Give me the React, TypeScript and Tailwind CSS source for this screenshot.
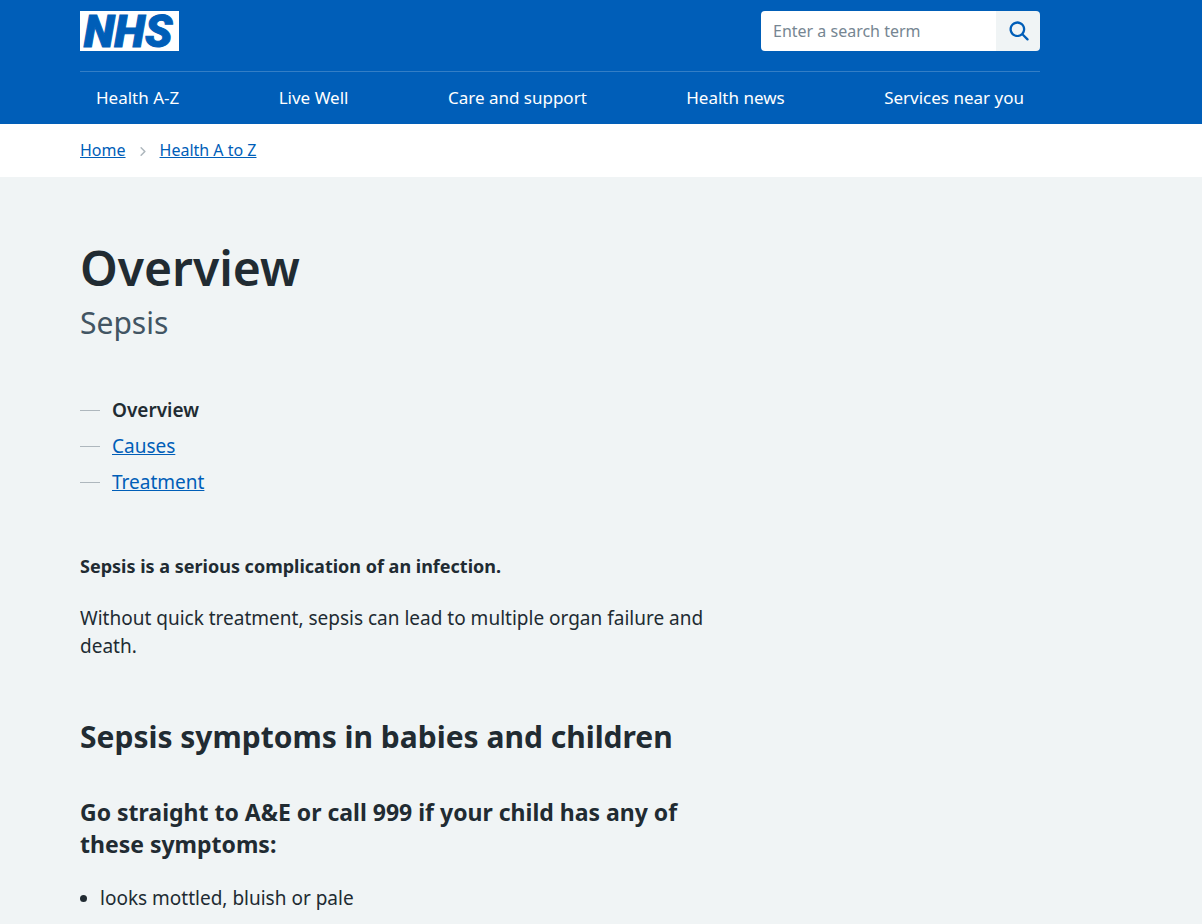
const navLinks = ["Health A-Z", "Live Well", "Care and support", "Health news", "Services near you"];

function Logo() {
  return (
    <a href="#" aria-label="NHS homepage" className="block">
      <svg viewBox="0 0 99 40" className="h-10 w-[99px] overflow-visible">
        <rect width="99" height="40" fill="#fff" />
        <text
          x="48"
          y="36"
          textAnchor="middle"
          fill="#005eb8"
          stroke="#005eb8"
          strokeWidth="1"
          className="font-['Roboto','Liberation_Sans',sans-serif] text-[45px] font-black italic"
        >
          NHS
        </text>
      </svg>
    </a>
  );
}

function Search() {
  return (
    <form className="flex h-10" role="search">
      <input
        type="search"
        aria-label="Search"
        placeholder="Enter a search term"
        className="w-[235px] rounded-l bg-white px-3 text-base text-[#212b32] placeholder:text-[#768692]"
      />
      <button
        type="button"
        aria-label="Submit search"
        className="flex w-11 items-center justify-center rounded-r bg-[#f0f4f5]"
      >
        <svg viewBox="-1 0 24 24" className="size-[27px]" fill="#005eb8">
          <path d="M19.71 18.29l-4.11-4.1a7 7 0 1 0-1.41 1.41l4.1 4.11a1 1 0 0 0 1.42 0 1 1 0 0 0 0-1.42zM5 10a5 5 0 1 1 5 5 5 5 0 0 1-5-5z" />
        </svg>
      </button>
    </form>
  );
}

function Header() {
  return (
    <header className="bg-[#005eb8] px-20 text-white">
      <div className="max-w-[960px]">
        <div className="flex justify-between pt-[11px] pb-5">
          <Logo />
          <Search />
        </div>
        <nav
          aria-label="Primary"
          className="flex h-[53px] items-center justify-between border-t border-[#337ec6] px-4"
        >
          {navLinks.map((label) => (
            <a key={label} href="#" className="text-[17px] leading-7">
              {label}
            </a>
          ))}
        </nav>
      </div>
    </header>
  );
}

export default function App() {
  return (
    <div className="min-h-screen bg-[#f0f4f5] font-['Noto_Sans',sans-serif] text-[#212b32]">
      <Header />
      <nav aria-label="Breadcrumb" className="bg-white px-20 pt-3.5 pb-[15px] text-base text-[#005eb8]">
        <ol className="flex items-center">
          <li>
            <a href="#" className="underline">
              Home
            </a>
          </li>
          <li className="flex items-center">
            <svg viewBox="0 0 24 24" className="mx-2 size-[18px]" fill="#aeb7bd">
              <path d="M15.5 14a1 1 0 0 1-.29.71l-5 5a1 1 0 0 1-1.42-1.42l4.3-4.29-4.3-4.29a1 1 0 0 1 1.42-1.42l5 5a1 1 0 0 1 .29.71z" />
            </svg>
            <a href="#" className="underline">
              Health A to Z
            </a>
          </li>
        </ol>
      </nav>
      <main className="px-20 pt-[63px]">
        <div className="max-w-[640px]">
          <h1 className="text-5xl leading-[56px] font-semibold">
            Overview
            <span className="block text-3xl leading-[53px] font-normal text-[#425563]">Sepsis</span>
          </h1>
          <ul className="mt-[47px] text-[19px] leading-7">
            <li className="mb-2 flex items-center gap-3">
              <span className="h-px w-5 bg-[#aeb7bd]" />
              <span className="font-semibold">Overview</span>
            </li>
            {["Causes", "Treatment"].map((label) => (
              <li key={label} className="mb-2 flex items-center gap-3">
                <span className="h-px w-5 bg-[#aeb7bd]" />
                <a href="#" className="text-[#005eb8] underline">
                  {label}
                </a>
              </li>
            ))}
          </ul>
          <p className="mt-14 text-lg leading-7 font-bold">Sepsis is a serious complication of an infection.</p>
          <p className="mt-6 text-[19px] leading-7">
            Without quick treatment, sepsis can lead to multiple organ failure and death.
          </p>
          <h2 className="mt-14 text-3xl leading-[42px] font-bold">Sepsis symptoms in babies and children</h2>
          <h3 className="mt-[38px] text-[23px] leading-8 font-bold">
            Go straight to A&amp;E or call 999 if your child has any of these symptoms:
          </h3>
          <ul className="mt-6 list-disc pl-5 text-[19px] leading-7">
            <li>looks mottled, bluish or pale</li>
          </ul>
        </div>
      </main>
    </div>
  );
}
